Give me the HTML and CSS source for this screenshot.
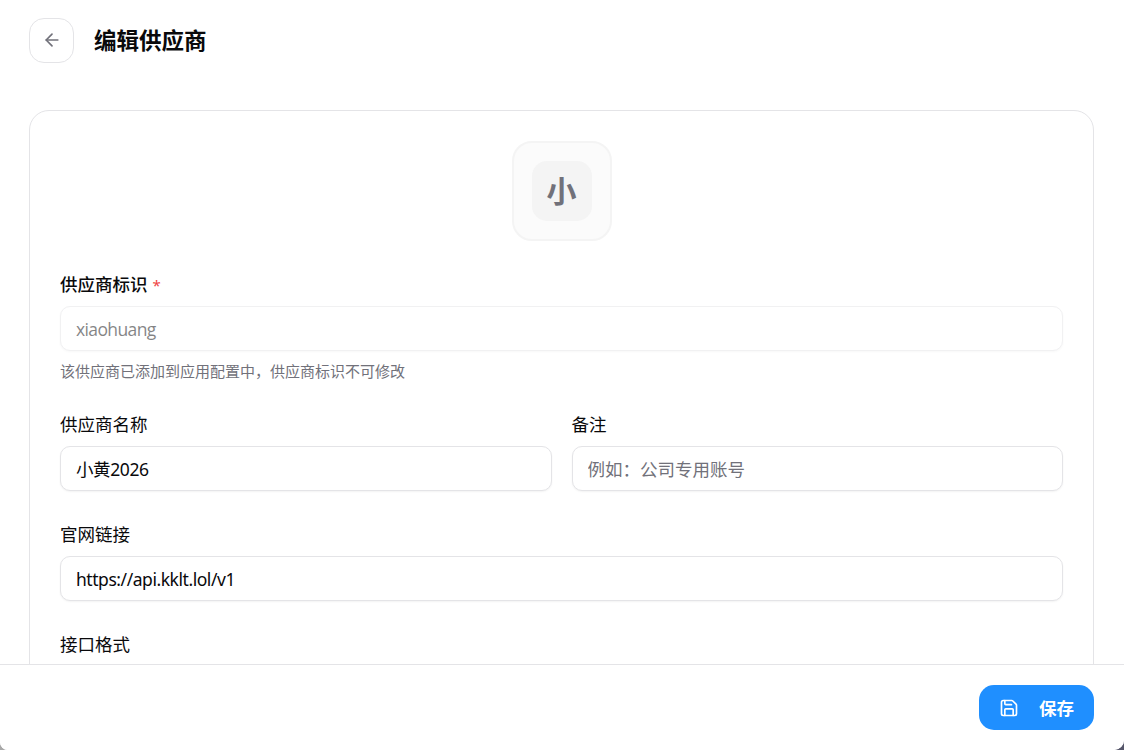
FILE: index.html
```html
<!DOCTYPE html>
<html lang="zh-CN">
  <head>
    <meta charset="UTF-8" />
    <meta name="viewport" content="width=device-width, initial-scale=1.0" />
    <title>编辑供应商</title>
    <link rel="stylesheet" href="styles.css">
  </head>
  <body>
    <div class="window">
      <header class="header">
        <button class="back-button" type="button" aria-label="返回">
          <svg class="icon-back" viewBox="0 0 24 24" fill="none" stroke="currentColor" stroke-width="2" stroke-linecap="round" stroke-linejoin="round">
            <path d="m12 19-7-7 7-7" />
            <path d="M19 12H5" />
          </svg>
        </button>
        <h1 class="title">编辑供应商</h1>
      </header>

      <main class="content">
        <form class="card" id="providerForm">
          <div class="avatar">
            <div class="avatar-inner">小</div>
          </div>

          <div class="field">
            <label class="label label-required" for="provider_id">供应商标识 <span class="required">*</span></label>
            <input class="input input-latin" id="provider_id" value="xiaohuang" disabled />
            <p class="hint">该供应商已添加到应用配置中，供应商标识不可修改</p>
          </div>

          <div class="row">
            <div class="field">
              <label class="label" for="provider_name">供应商名称</label>
              <input class="input input-name" id="provider_name" value="小黄2026" />
            </div>
            <div class="field">
              <label class="label" for="notes">备注</label>
              <input class="input" id="notes" placeholder="例如：公司专用账号" />
            </div>
          </div>

          <div class="field">
            <label class="label" for="website">官网链接</label>
            <input class="input input-url" id="website" value="https://api.kklt.lol/v1" />
          </div>

          <div class="field">
            <span class="label">接口格式</span>
          </div>
        </form>
      </main>

      <footer class="footer">
        <button class="save-button" type="submit" form="providerForm">
          <svg class="icon-save" viewBox="0 0 24 24" fill="none" stroke="currentColor" stroke-width="2" stroke-linecap="round" stroke-linejoin="round">
            <path d="M15.2 3a2 2 0 0 1 1.4.6l3.8 3.8a2 2 0 0 1 .6 1.4V19a2 2 0 0 1-2 2H5a2 2 0 0 1-2-2V5a2 2 0 0 1 2-2z" />
            <path d="M17 21v-7a1 1 0 0 0-1-1H8a1 1 0 0 0-1 1v7" />
            <path d="M7 3v4a1 1 0 0 0 1 1h7" />
          </svg>
          <span>保存</span>
        </button>
      </footer>
    </div>
  </body>
</html>
```
FILE: styles.css
```css
* {
  box-sizing: border-box;
}
body {
  margin: 0;
  background: linear-gradient(to right, #a8a8a8 50%, #55566a 50%);
  color: #09090b;
  font-family: "Noto Sans", "Noto Sans CJK SC", sans-serif;
  font-size: 17.5px;
}
.window {
  display: flex;
  flex-direction: column;
  height: 100vh;
  overflow: hidden;
  background: #fff;
  border-radius: 0 0 10px 8px;
}
.header {
  display: flex;
  flex: none;
  align-items: center;
  gap: 20px;
  height: 80px;
  padding: 0 30px 0 29px;
}
.back-button {
  display: flex;
  align-items: center;
  justify-content: center;
  width: 45px;
  height: 45px;
  padding: 0;
  border: 1px solid #e4e4e7;
  border-radius: 15px;
  background: #fff;
  color: #71717a;
}
.icon-back {
  width: 20px;
  height: 20px;
}
.title {
  margin: 0;
  padding-bottom: 2px;
  font-family: "Noto Sans CJK SC", sans-serif;
  font-size: 22.5px;
  font-weight: 700;
  line-height: 35px;
}
.content {
  flex: 1;
  min-height: 0;
  overflow: hidden;
  padding: 30px 30px 0 29px;
}
.card {
  display: flex;
  flex-direction: column;
  gap: 30px;
  min-height: 700px;
  padding: 30px;
  border: 1px solid #e4e4e7;
  border-radius: 20px;
}
.avatar {
  display: flex;
  align-items: center;
  justify-content: center;
  align-self: center;
  width: 100px;
  height: 100px;
  border: 2px solid #f4f4f4;
  border-radius: 20px;
  background: #fbfbfb;
}
.avatar-inner {
  width: 60px;
  height: 60px;
  border-radius: 15px;
  background: #f4f4f4;
  color: #71717a;
  font-family: "Noto Sans CJK SC", sans-serif;
  font-size: 30px;
  font-weight: 700;
  line-height: 57px;
  text-align: center;
}
.row {
  display: grid;
  grid-template-columns: 1fr 1fr;
  gap: 20px;
}
.field {
  display: flex;
  flex-direction: column;
  gap: 10px;
}
.label {
  font-family: "Noto Sans CJK SC", sans-serif;
  line-height: 25px;
}
.label-required {
  font-weight: 500;
}
.required {
  margin-left: 1px;
  color: #ef4444;
  font-family: "Noto Sans", sans-serif;
  font-size: 15px;
  font-weight: 400;
  line-height: 1;
}
.input {
  width: 100%;
  height: 45px;
  padding: 0 15px;
  border: 1px solid #e4e4e7;
  border-radius: 10px;
  background: #fff;
  box-shadow: 0 1px 2px rgba(0, 0, 0, 0.05);
  color: #09090b;
  font-family: inherit;
  font-size: 17.5px;
}
.input::placeholder {
  color: #71717a;
  opacity: 1;
}
.input:disabled {
  opacity: 0.5;
}
.input-latin {
  font-family: "Open Sans", "Noto Sans", sans-serif;
  letter-spacing: -0.62px;
}
.input-url {
  letter-spacing: -0.45px;
}
.input-name {
  letter-spacing: -0.4px;
}
.hint {
  margin: 0;
  color: #71717a;
  font-family: "Noto Sans CJK SC", sans-serif;
  font-size: 15px;
  line-height: 20px;
}
.footer {
  display: flex;
  flex: none;
  align-items: center;
  justify-content: flex-end;
  height: 86px;
  padding: 0 30px;
  border-top: 1px solid #e4e4e7;
  background: #fff;
}
.save-button {
  display: flex;
  align-items: center;
  gap: 20px;
  height: 45px;
  padding: 0 20px;
  border: 0;
  border-radius: 15px;
  background: #1f8fff;
  color: #fff;
  font-family: "Noto Sans CJK SC", sans-serif;
  font-size: 17.5px;
  font-weight: 700;
}
.save-button span {
  padding-bottom: 1px;
}
.icon-save {
  width: 20px;
  height: 20px;
}
```
